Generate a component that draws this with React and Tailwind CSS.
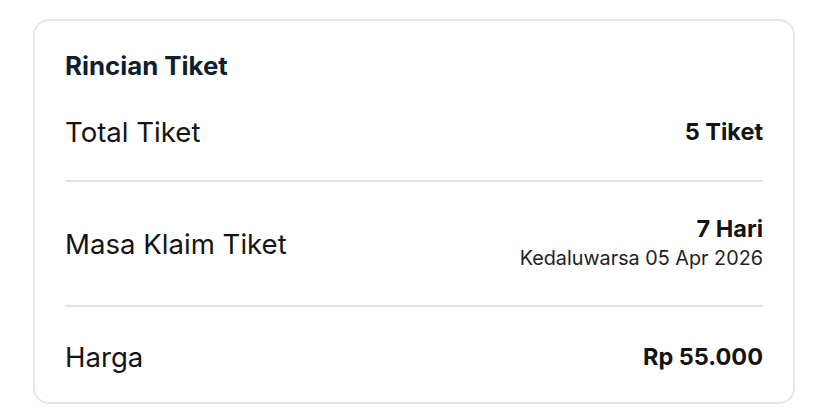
export default function App() {
  return (
    <div className="min-h-screen bg-white px-[33px] pt-[19px] pb-[14px]" style={{ fontFamily: 'Inter, "Noto Sans", sans-serif' }}>
      <div className="rounded-[16px] border-2 border-[#e6e6e6] bg-white px-[30px] pt-[29px]">
        <h2 className="text-[25.8px] leading-[32px] font-bold text-[#0d1f30]">Rincian Tiket</h2>

        <div className="flex items-center justify-between pt-8 pb-[30px] border-b-2 border-[#e4e4e4]">
          <span className="text-[27.6px] leading-[36px] text-[#141414]">Total Tiket</span>
          <span className="text-[23.5px] leading-[28px] font-bold text-[#141414]">5 Tiket</span>
        </div>

        <div className="flex items-center justify-between py-[33px] border-b-2 border-[#e4e4e4]">
          <span className="text-[27.6px] leading-[36px] text-[#141414]">Masa Klaim Tiket</span>
          <div className="flex flex-col items-end">
            <span className="text-[23.5px] leading-[28px] font-bold text-[#141414]">7 Hari</span>
            <span className="mt-px text-[19.8px] leading-[28px] text-[#222]">Kedaluwarsa 05 Apr 2026</span>
          </div>
        </div>

        <div className="flex items-center justify-between pt-8 pb-[27px]">
          <span className="text-[27.6px] leading-[36px] text-[#141414]">Harga</span>
          <span className="text-[23.5px] leading-[28px] font-bold text-[#141414]">Rp 55.000</span>
        </div>
      </div>
    </div>
  )
}
